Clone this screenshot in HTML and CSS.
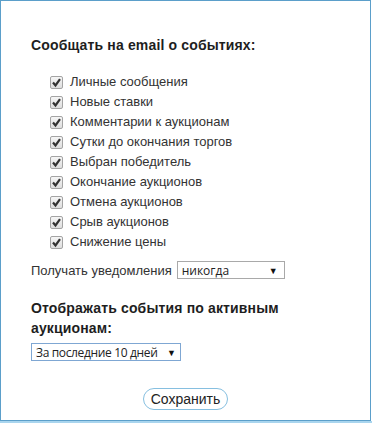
FILE: index.html
```html
<!DOCTYPE html>
<html lang="ru">
<head>
<meta charset="utf-8">
<title>Настройки уведомлений</title>
<link rel="stylesheet" href="styles.css">
</head>
<body>
<div class="frame">
  <form class="settings">
    <h3 class="heading">Сообщать на email о событиях:</h3>
    <ul class="events">
      <li><label><span class="box"><svg viewBox="0 0 13 13" width="13" height="13"><path d="M3 6.5 L5.5 9.5 L10 3.2" /></svg></span>Личные сообщения</label></li>
      <li><label><span class="box"><svg viewBox="0 0 13 13" width="13" height="13"><path d="M3 6.5 L5.5 9.5 L10 3.2" /></svg></span>Новые ставки</label></li>
      <li><label><span class="box"><svg viewBox="0 0 13 13" width="13" height="13"><path d="M3 6.5 L5.5 9.5 L10 3.2" /></svg></span>Комментарии к аукционам</label></li>
      <li><label><span class="box"><svg viewBox="0 0 13 13" width="13" height="13"><path d="M3 6.5 L5.5 9.5 L10 3.2" /></svg></span>Сутки до окончания торгов</label></li>
      <li><label><span class="box"><svg viewBox="0 0 13 13" width="13" height="13"><path d="M3 6.5 L5.5 9.5 L10 3.2" /></svg></span>Выбран победитель</label></li>
      <li><label><span class="box"><svg viewBox="0 0 13 13" width="13" height="13"><path d="M3 6.5 L5.5 9.5 L10 3.2" /></svg></span>Окончание аукционов</label></li>
      <li><label><span class="box"><svg viewBox="0 0 13 13" width="13" height="13"><path d="M3 6.5 L5.5 9.5 L10 3.2" /></svg></span>Отмена аукционов</label></li>
      <li><label><span class="box"><svg viewBox="0 0 13 13" width="13" height="13"><path d="M3 6.5 L5.5 9.5 L10 3.2" /></svg></span>Срыв аукционов</label></li>
      <li><label><span class="box"><svg viewBox="0 0 13 13" width="13" height="13"><path d="M3 6.5 L5.5 9.5 L10 3.2" /></svg></span>Снижение цены</label></li>
    </ul>
    <div class="notify">
      <span class="notify-label">Получать уведомления</span>
      <span class="select select-wide"><span class="select-text">никогда</span><span class="arrow">▼</span></span>
    </div>
    <h3 class="heading heading-two">Отображать события по активным аукционам:</h3>
    <span class="select select-period"><span class="select-text">За последние 10 дней</span><span class="arrow">▼</span></span>
    <div class="actions">
      <button type="button" class="save">Сохранить</button>
    </div>
  </form>
</div>
<div class="strip"></div>
</body>
</html>
```

FILE: styles.css
```css
html, body {
  margin: 0;
  padding: 0;
  background: #ffffff;
}

body {
  font-family: "Liberation Sans", Arial, sans-serif;
  color: #222;
}

.frame {
  box-sizing: border-box;
  width: 371px;
  height: 421px;
  border: 1px solid #5b9fca;
  background: #fff;
}

.strip {
  width: 372px;
  height: 2px;
  background: #a9d5ee;
}

.settings {
  display: flex;
  flex-direction: column;
  align-items: flex-start;
  padding: 34px 0 0 30px;
}

.heading {
  margin: 0;
  font-size: 14px;
  line-height: 20px;
  font-weight: bold;
  color: #1e1e1e;
  letter-spacing: 0.15px;
}

.heading-two {
  margin-top: 18px;
  width: 260px;
}

.events {
  list-style: none;
  margin: 16px 0 0 0;
  padding: 0 0 0 19px;
}

.events li {
  height: 20px;
  line-height: 20px;
  font-size: 13px;
  color: #333;
}

.events label {
  display: flex;
  align-items: center;
  padding-top: 1px;
}

.box {
  box-sizing: border-box;
  width: 13px;
  height: 13px;
  margin-right: 7px;
  border: 1px solid #a4a4a4;
  border-radius: 2px;
  background: linear-gradient(#f6f6f6, #dedede);
  display: flex;
}

.box svg {
  margin: -1px;
}

.box path {
  fill: none;
  stroke: #333;
  stroke-width: 2.2;
}

.notify {
  margin-top: 9px;
  height: 20px;
  display: flex;
  align-items: center;
  font-size: 13px;
  color: #333;
}

.notify-label {
  margin-right: 5px;
}

.select {
  box-sizing: border-box;
  height: 18px;
  border: 1px solid #a9a9a9;
  display: flex;
  align-items: center;
  justify-content: space-between;
  gap: 4px;
  padding: 0 6px 0 4px;
  font-family: "Open Sans", sans-serif;
  font-size: 12px;
  color: #222;
  background: #fff;
  white-space: nowrap;
}

.select-wide {
  width: 108px;
}

.select-period {
  margin-top: 5px;
  width: 150px;
  border-color: #7fa7d3;
  letter-spacing: -0.35px;
  padding-right: 4px;
}

.arrow {
  font-size: 9px;
  color: #111;
  letter-spacing: 0;
}

.actions {
  align-self: stretch;
  display: flex;
  justify-content: center;
  margin: 27px 30px 0 0;
}

.save {
  box-sizing: border-box;
  height: 22px;
  padding: 0 7px;
  border: 1px solid #86bfe0;
  border-radius: 11px;
  background: #fff;
  font-family: "Liberation Sans", Arial, sans-serif;
  font-size: 14px;
  color: #222;
}
```
